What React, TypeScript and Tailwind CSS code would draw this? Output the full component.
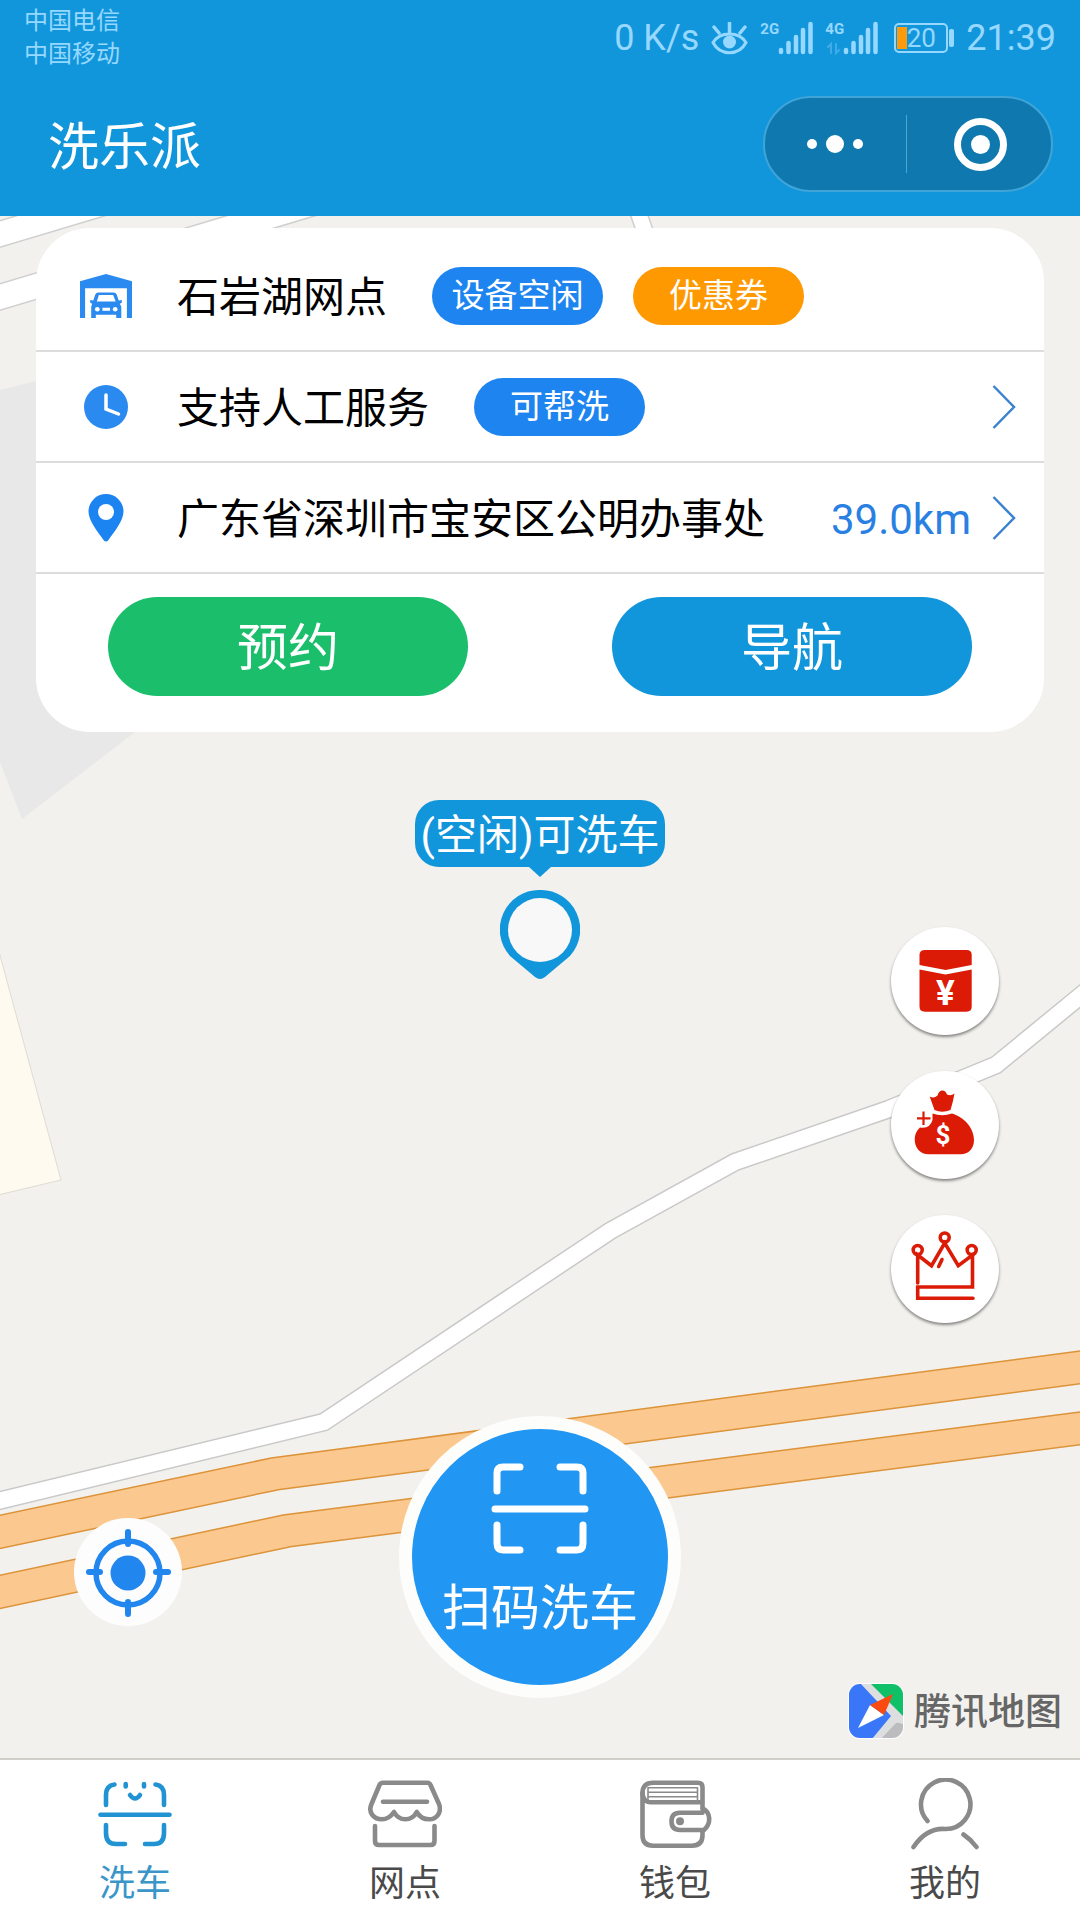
import React from "react";

const EyeIcon = () => (
  <svg width="37" height="33" viewBox="0 0 37 33" fill="none" stroke="currentColor">
    <path d="M2 20.500C9 9 28 9 35 20.500C28 34 9 34 2 20.500Z" strokeWidth="3" />
    <circle cx="18.500" cy="20" r="6.500" fill="currentColor" stroke="none" />
    <path d="M18.500 1V10M3 5L8 11M34 5L29 11" strokeWidth="3.500" strokeLinecap="round" />
  </svg>
);

const Signal = ({ label, data }: { label: string; data?: boolean }) => (
  <div className="relative h-[34px] w-[53px]">
    <span className="absolute top-0 left-0 text-[15px] leading-[16px] font-bold">
      {label}
    </span>
    <svg width="53" height="34" viewBox="0 0 53 34" stroke="currentColor" strokeLinecap="round">
      <path d="M21 29V31M28.500 22V31M36 16V31M43 9V31M50.500 3V31" strokeWidth="4.500" />
      {data && (
        <path d="M6 32V23L3 26M11 23V32L14 29" strokeWidth="2" opacity="0.35" fill="none" />
      )}
    </svg>
  </div>
);

const BatteryIcon = () => (
  <div className="relative ml-1 flex h-[30px] w-[60px] items-center">
    <svg className="absolute inset-0" width="60" height="30" viewBox="0 0 60 30">
      <rect x="1" y="1" width="52" height="28" rx="4" fill="none" stroke="currentColor" strokeWidth="2" />
      <rect x="3" y="4" width="10" height="22" fill="#ff9a0c" />
      <rect x="55" y="6" width="5" height="18" rx="2" fill="currentColor" />
    </svg>
    <span className="relative w-[54px] text-center text-[26px] leading-[30px]">20</span>
  </div>
);

const GarageIcon = () => (
  <svg width="52" height="44" viewBox="0 0 51 43" fill="#2b8af0">
    <path d="M0 7L25.500 0L51 7V43H46V14H5V43H0Z" />
    <path
      fillRule="evenodd"
      d="M18 18H33Q35 18 36 20L38 26L41 25.500V28L39 29Q40.500 31 40.500 33V43H35.500V40H15.500V43H11V33Q11 31 12 29L10 28V25.500L13 26L15 20Q16 18 18 18ZM18.500 20.500L16.500 27H35L32.500 20.500Z"
    />
    <circle cx="17" cy="34.500" r="2.300" fill="#fff" />
    <circle cx="34.500" cy="34.500" r="2.300" fill="#fff" />
    <path d="M22 33H29.500V36H22Z" fill="#fff" />
  </svg>
);

const ClockIcon = () => (
  <svg width="44" height="44" viewBox="0 0 44 44">
    <circle cx="22" cy="22" r="22" fill="#2b8af0" />
    <path d="M22 10V24L34.500 29" fill="none" stroke="#fff" strokeWidth="3.500" strokeLinecap="round" />
  </svg>
);

const PinIcon = () => (
  <svg width="36" height="48" viewBox="0 0 36 48">
    <path
      d="M18 0A17.500 17.500 0 0 1 35.500 17.500C35.500 27 26 38 20.500 46Q18 49 15.500 46C10 38 0.500 27 0.500 17.500A17.500 17.500 0 0 1 18 0Z"
      fill="#1b84f0"
    />
    <circle cx="18" cy="18" r="8" fill="#fff" />
  </svg>
);

const Chevron = () => (
  <svg width="24" height="44" viewBox="0 0 24 44" fill="none" stroke="#3b82cf" strokeWidth="2.500">
    <path d="M1.500 1L22 22L1.500 43" />
  </svg>
);

const RedPacketIcon = () => (
  <svg viewBox="0 0 108 108" fill="#db1b06">
    <path d="M28.500 38V28Q28.500 23 34 23H75.500Q80.700 23 80.700 28V38L54.500 43Z" />
    <path d="M28.500 42.500L54.500 47.500L80.700 42.500V79.500Q80.700 84.700 75.500 84.700H34Q28.500 84.700 28.500 79.500Z" />
    <text x="54.500" y="77.500" textAnchor="middle" fontSize="35" fontWeight="700" fill="#fff">
      ¥
    </text>
  </svg>
);

const MoneyBagIcon = () => (
  <svg viewBox="0 0 108 108" fill="#db1b06">
    <path d="M38.700 25.500Q43 28 46.500 24.500Q48 19.500 51.500 19.500Q54.500 19.500 56 23.500Q60 25.500 63.500 22.500Q62 31 59.500 39Q51 42.500 43.500 39Z" />
    <path d="M41.500 42.500Q51 46 61 42.500C73 46 83 57 83 69C83 78 77 83.300 70 83.300H38C29 83.300 23.700 77 23.700 68Q24 61 29 56.500Q39 58 41.500 49Z" />
    <path d="M32.500 40.500V54M26 47.300H39.500" stroke="#db1b06" strokeWidth="2.200" />
    <text x="52" y="72.500" textAnchor="middle" fontSize="26" fontWeight="700" fill="#fff">
      $
    </text>
  </svg>
);

const CrownIcon = () => (
  <svg
    viewBox="0 0 108 108"
    fill="none"
    stroke="#db1b06"
    strokeWidth="3.600"
    strokeLinecap="round">
    <circle cx="26.700" cy="35" r="4.500" />
    <circle cx="53.700" cy="22.500" r="4.500" />
    <circle cx="80.700" cy="35" r="4.500" />
    <path d="M26.700 68V40L40.500 50.700L53.700 28L67.300 50.700L81.500 40V72H26.700V83.300H82" />
    <path d="M51 44.500L47.700 51.500" />
  </svg>
);

const LocateIcon = () => (
  <svg viewBox="0 0 108 108" fill="none" stroke="#2186ee">
    <circle cx="54" cy="55" r="32" strokeWidth="5.500" />
    <circle cx="54" cy="55" r="17.500" fill="#2186ee" stroke="none" />
    <path
      d="M54 14V26M54 84V96M15 54H26M82 54H94"
      strokeWidth="6"
      strokeLinecap="round"
    />
  </svg>
);

const ScanIcon = () => (
  <svg
    width="98"
    height="92"
    viewBox="0 0 98 92"
    fill="none"
    stroke="#fff"
    strokeWidth="7"
    strokeLinecap="round"
    strokeLinejoin="round">
    <path d="M6 28V10Q6 4 12 4H29M69 4H86Q92 4 92 10V28" />
    <path d="M4 46H94" />
    <path d="M6 62V80Q6 87 12 87H29M69 87H86Q92 87 92 80V62" />
  </svg>
);

const TencentLogo = () => (
  <svg width="56" height="56" viewBox="0 0 56 56">
    <defs>
      <clipPath id="logo-clip">
        <rect x="1" y="1" width="54" height="54" rx="11" />
      </clipPath>
    </defs>
    <rect width="56" height="56" rx="12" fill="#fff" />
    <g clipPath="url(#logo-clip)">
      <rect width="56" height="56" fill="#dcdee0" />
      <path d="M0 0H12L43 33L24 56H0Z" fill="#3a76f8" />
      <path d="M22 0H56V34Z" fill="#10c068" />
      <path d="M33 56L47 41Q50 38 56 42V56Z" fill="#bcbcbe" />
      <path d="M10 45L22 22L36 32Z" fill="#fff" />
      <path d="M45 11L36 32L22 22Z" fill="#fa4a10" />
    </g>
  </svg>
);

const WashTabIcon = () => (
  <>
    <path d="M16.500 6.500Q8 7.500 8 17V27M57.500 6.500Q66 7.500 66 17V27" />
    <path d="M27.700 6V8.500M46 6V8.500" />
    <path d="M32 17Q37 24 42 17" />
    <path d="M2.500 36.700H71.500" />
    <path d="M8 47V55Q8 66 18 66H27M66 47V55Q66 66 56 66H47" />
  </>
);

const StoreTabIcon = () => (
  <>
    <path d="M15 4.700H59.500Q61.500 4.700 62.500 7L71 26C74 34 69 41.300 61 41.300Q53 41.300 48.700 34Q45 41.300 37.300 41.300Q30 41.300 26 34Q21 41.300 14 41.300C5 41.300 0 34 3.500 26L11.500 7Q12.500 4.700 15 4.700Z" />
    <path d="M15 23.700H59" />
    <path d="M7 48V63Q7 67 11 67H62.500Q66.500 67 66.500 63V48" />
  </>
);

const WalletTabIcon = () => (
  <>
    <path d="M64.500 31V9Q64.500 4.700 60 4.700H15Q4.500 4.700 4.500 15V57Q4.500 67.700 15 67.700H54Q64.500 67.700 64.500 57V53" />
    <path d="M4.500 15Q5 24.300 13 24.300H64" />
    <path d="M10 23V9.700H59.500V23M10 14.300H59.500M10 18.700H59.500" strokeWidth="1.600" />
    <path d="M64.500 34.700H42Q33.500 34.700 33.500 43.300Q33.500 52 42 52H66C74 45 72 34 65 30.500" />
    <circle cx="42" cy="43.300" r="4" fill="currentColor" stroke="none" />
  </>
);

const MineTabIcon = () => (
  <>
    <path d="M19.500 43A24.700 24.700 0 1 1 37 51C23 50 13 58 5.500 69" />
    <path d="M55.500 56.500Q63 61.500 68.500 69" />
  </>
);

const tabs = [
  { label: "洗车", icon: <WashTabIcon />, active: true },
  { label: "网点", icon: <StoreTabIcon />, active: false },
  { label: "钱包", icon: <WalletTabIcon />, active: false },
  { label: "我的", icon: <MineTabIcon />, active: false },
];

const sideActions = [
  { label: "红包", icon: <RedPacketIcon /> },
  { label: "充值", icon: <MoneyBagIcon /> },
  { label: "会员", icon: <CrownIcon /> },
];

const MapCanvas = () => (
  <svg
    className="absolute inset-0 h-full w-full"
    viewBox="0 216 1080 1542"
    preserveAspectRatio="xMidYMin slice"
    fill="none">
    <rect y="216" width="1080" height="1542" fill="#f3f1ee" />
    <path d="M0 390L180 345V700L135 732L22 819L0 762Z" fill="#e8e8e8" />
    <path d="M-2 948L61 1180L-2 1195Z" fill="#fefaf0" stroke="#dedbd4" />

    {/* minor roads: casing first, then the surface */}
    <path d="M-20 240L120 198M-20 303L320 201" stroke="#cfcfcf" strokeWidth="27" />
    <path d="M-20 240L120 198M-20 303L320 201" stroke="#fff" strokeWidth="24" />
    <path d="M636 206L650 246" stroke="#cfcfcf" strokeWidth="18" />
    <path d="M636 206L650 246" stroke="#fff" strokeWidth="15" />
    <path
      d="M-10 1503L324 1422L610 1231L735 1162L889 1109L996 1065L1090 988"
      stroke="#c9c9c9"
      strokeWidth="19"
    />
    <path
      d="M-10 1503L324 1422L610 1231L735 1162L889 1109L996 1065L1090 988"
      stroke="#fff"
      strokeWidth="16"
    />

    {/* highway */}
    <path d="M-10 1534L274 1474L1090 1366M-10 1594L286 1531L1090 1427" stroke="#dc9339" strokeWidth="34" />
    <path d="M-10 1534L274 1474L1090 1366M-10 1594L286 1531L1090 1427" stroke="#fbc98f" strokeWidth="31" />
  </svg>
);

const StatusBar = () => (
  <div className="flex h-[72px] items-center justify-between px-6 pt-1 text-[#96d8ff]">
    <div className="text-[24px] leading-[33px]">
      <div>中国电信</div>
      <div>中国移动</div>
    </div>
    <div className="flex items-center gap-3 text-[36px] leading-[40px]">
      <span>0 K/s</span>
      <EyeIcon />
      <Signal label="2G" />
      <Signal label="4G" data />
      <BatteryIcon />
      <span>21:39</span>
    </div>
  </div>
);

const StationCard = () => (
  <section className="relative mx-9 mt-3 rounded-[54px] bg-white text-[42px] leading-[56px] text-black">
    <div className="flex h-[124px] items-center border-b-2 border-[#dcdcdc] pt-[14px] pl-[43px]">
      <span className="flex w-[54px] justify-center">
        <GarageIcon />
      </span>
      <h2 className="ml-11 pt-1">石岩湖网点</h2>
      <span className="ml-[45px] flex h-[58px] w-[171px] items-center justify-center rounded-full bg-[#1e84f0] text-[33px] text-white">
        设备空闲
      </span>
      <button className="ml-[30px] flex h-[58px] w-[171px] items-center justify-center rounded-full bg-[#ff9902] text-[33px] text-white">
        优惠券
      </button>
    </div>
    <a href="#service" className="flex h-[111px] items-center border-b-2 border-[#dcdcdc] pr-7 pl-[43px]">
      <span className="flex w-[54px] justify-center">
        <ClockIcon />
      </span>
      <span className="ml-11 pt-1">支持人工服务</span>
      <span className="ml-[45px] flex h-[58px] w-[171px] items-center justify-center rounded-full bg-[#1e84f0] text-[33px] text-white">
        可帮洗
      </span>
      <span className="ml-auto">
        <Chevron />
      </span>
    </a>
    <a href="#address" className="flex h-[111px] items-center border-b-2 border-[#dcdcdc] pr-7 pl-[43px]">
      <span className="flex w-[54px] justify-center">
        <PinIcon />
      </span>
      <span className="ml-11 pt-1">广东省深圳市宝安区公明办事处</span>
      <span className="mr-[21px] ml-auto pt-1 text-[#2a80e2]">39.0km</span>
      <Chevron />
    </a>
    <div className="grid grid-cols-2 gap-36 px-[72px] pt-[23px] pb-9 text-[51px] text-white">
      <button className="h-[99px] rounded-full bg-[#1bbf6b] pt-1">预约</button>
      <button className="h-[99px] rounded-full bg-[#1296db] pt-1">导航</button>
    </div>
  </section>
);

export default function App() {
  return (
    <div className="flex min-h-screen flex-col bg-white font-['Roboto','Noto_Sans_CJK_SC',sans-serif]">
      <header className="bg-[#1296db]">
        <StatusBar />
        <div className="flex h-36 items-center justify-between pr-[27px] pl-12">
          <h1 className="pt-2 text-[51px] leading-[64px] text-white">洗乐派</h1>
          <div className="flex h-24 w-[290px] items-center rounded-full border-2 border-[#3fa5d8] bg-[#0f78af]">
            <button aria-label="更多" className="flex h-full flex-1 items-center justify-center gap-[9px]">
              <span className="size-[10px] rounded-full bg-white" />
              <span className="size-[18px] rounded-full bg-white" />
              <span className="size-[10px] rounded-full bg-white" />
            </button>
            <span className="h-[58px] w-px bg-[#4fa5d2]" />
            <button aria-label="关闭" className="flex h-full flex-1 items-center justify-center pl-1">
              <span className="flex size-[53px] items-center justify-center rounded-full border-[7px] border-white">
                <span className="size-[19px] rounded-full bg-white" />
              </span>
            </button>
          </div>
        </div>
      </header>

      <main className="relative flex-1 overflow-hidden">
        <MapCanvas />
        <StationCard />

        {/* station marker */}
        <div className="absolute top-[584px] left-1/2 flex -translate-x-1/2 flex-col items-center">
          <div className="flex h-[67px] w-[250px] items-center justify-center rounded-[24px] bg-[#1296db] pt-1 text-[42px] leading-[56px] whitespace-nowrap text-white">
            (空闲)可洗车
          </div>
          <svg width="22" height="10" viewBox="0 0 22 10">
            <path d="M0 0H22L11 10Z" fill="#1296db" />
          </svg>
          <svg className="mt-[13px]" width="80" height="90" viewBox="0 0 80 90">
            <path
              d="M40 0A39.500 39.500 0 0 1 70 66L45 87Q40 91 35 87L10 66A39.500 39.500 0 0 1 40 0Z"
              fill="#1296db"
            />
            <circle cx="40" cy="40" r="32" fill="#f8f8f8" />
          </svg>
        </div>

        <div className="absolute top-[711px] right-[81px] flex flex-col gap-9">
          {sideActions.map((item) => (
            <button
              key={item.label}
              aria-label={item.label}
              className="size-[108px] rounded-full bg-white shadow-[0_2px_3px_rgba(0,0,0,0.45)]">
              {item.icon}
            </button>
          ))}
        </div>

        <button
          aria-label="定位"
          className="absolute bottom-[132px] left-[74px] size-[108px] rounded-full bg-[#fdfdfd]">
          <LocateIcon />
        </button>

        <button className="absolute bottom-[60px] left-1/2 flex size-[282px] -translate-x-1/2 flex-col items-center rounded-full border-[13px] border-[#fdfdfc] bg-[#2196f3] pt-[34px] text-[49px] leading-[64px] text-white">
          <ScanIcon />
          <span className="mt-[22px] whitespace-nowrap">扫码洗车</span>
        </button>

        <div className="absolute right-[18px] bottom-[17px] flex items-center gap-[10px]">
          <TencentLogo />
          <span className="pt-1 text-[37px] leading-[56px] font-medium text-[#666]">腾讯地图</span>
        </div>
      </main>

      <nav className="grid h-[162px] grid-cols-4 border-t-2 border-[#cfd1c9] bg-white">
        {tabs.map((tab) => (
          <a
            key={tab.label}
            href="#"
            className={`flex flex-col items-center pt-[18px] ${
              tab.active ? "text-[#2193d3]" : "text-[#8a8a8a]"
            }`}>
            <svg
              width="74"
              height="72"
              viewBox="0 0 74 72"
              fill="none"
              stroke="currentColor"
              strokeWidth="4.600"
              strokeLinecap="round"
              strokeLinejoin="round">
              {tab.icon}
            </svg>
            <span
              className={`mt-[10px] text-[36px] leading-[48px] ${
                tab.active ? "text-[#3a96c8]" : "text-[#4a4a4a]"
              }`}>
              {tab.label}
            </span>
          </a>
        ))}
      </nav>
    </div>
  );
}
